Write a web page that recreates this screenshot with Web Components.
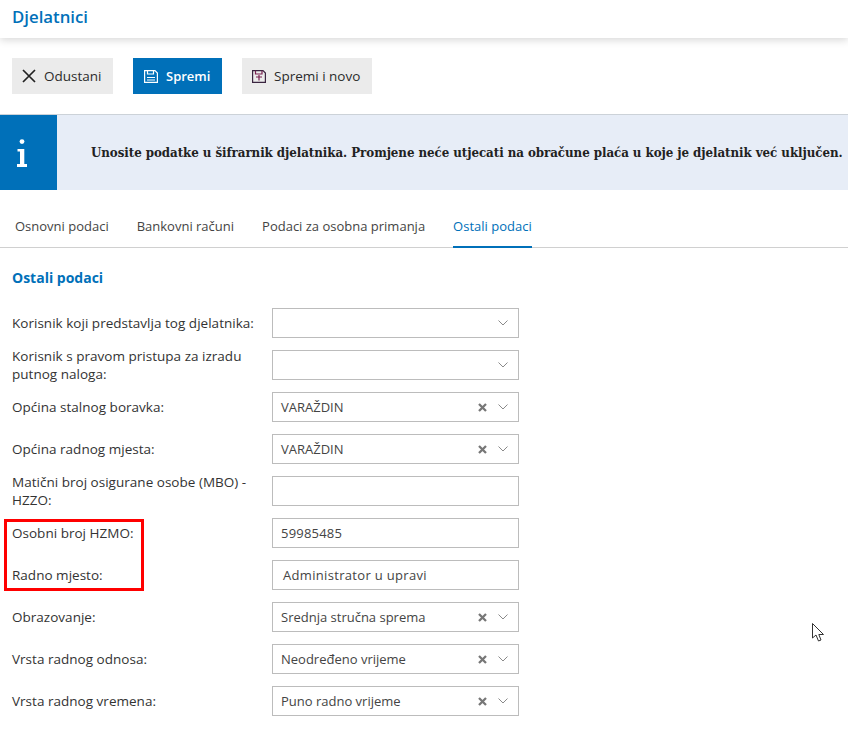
<!DOCTYPE html>
<html lang="hr"><head><meta charset="utf-8"><title>Djelatnici</title>
<style>
html,body{margin:0;padding:0;background:#fff;width:848px;height:731px;overflow:hidden}
body{font-family:"Open Sans","Noto Sans",sans-serif;color:#333;position:relative}
.bar{display:flex;gap:20px;padding:20px 12px 20px}
</style></head><body>
<page-header>Djelatnici</page-header>
<div class="bar">
<tool-button icon="x" style="width:101px">Odustani</tool-button>
<tool-button icon="save" primary style="width:89px">Spremi</tool-button>
<tool-button icon="savenew" style="width:130px">Spremi i novo</tool-button>
</div>
<notice-bar>Unosite podatke u šifrarnik djelatnika. Promjene neće utjecati na obračune plaća u koje je djelatnik već uključen.</notice-bar>
<tab-bar><tab-item>Osnovni podaci</tab-item><tab-item>Bankovni računi</tab-item><tab-item>Podaci za osobna primanja</tab-item><tab-item active>Ostali podaci</tab-item></tab-bar>
<form-section heading="Ostali podaci">
<form-row label="Korisnik koji predstavlja tog djelatnika:"><select-field></select-field></form-row>
<form-row label="Korisnik s pravom pristupa za izradu putnog naloga:"><select-field></select-field></form-row>
<form-row label="Općina stalnog boravka:"><select-field value="VARAŽDIN"></select-field></form-row>
<form-row label="Općina radnog mjesta:"><select-field value="VARAŽDIN"></select-field></form-row>
<form-row label="Matični broj osigurane osobe (MBO) - HZZO:"><text-field></text-field></form-row>
<form-row label="Osobni broj HZMO:"><text-field value="59985485"></text-field></form-row>
<form-row label="Radno mjesto:"><text-field value="Administrator u upravi" wide></text-field></form-row>
<form-row label="Obrazovanje:"><select-field value="Srednja stručna sprema"></select-field></form-row>
<form-row label="Vrsta radnog odnosa:"><select-field value="Neodređeno vrijeme"></select-field></form-row>
<form-row label="Vrsta radnog vremena:"><select-field value="Puno radno vrijeme"></select-field></form-row>
</form-section>
<red-mark></red-mark>
<mouse-cursor></mouse-cursor>
<script>
function def(name,html){customElements.define(name,class extends HTMLElement{
constructor(){super();this.attachShadow({mode:'open'})}
connectedCallback(){this.shadowRoot.innerHTML=typeof html==='function'?html(this):html}
})}
const icons={
x:`<svg width="14" height="14" viewBox="0 0 14 14"><path d="M1 1L13 13M13 1L1 13" stroke="#222" stroke-width="1.7" fill="none"/></svg>`,
save:`<svg width="14" height="13" viewBox="0 0 14 13" fill="none" stroke="#fff" stroke-width="1.2"><path d="M.6.6H11L13.4 3V12.4H.6Z"/><path d="M3.5.8V4H9.5V.8M3 7.5H11M3 10H11"/></svg>`,
savenew:`<svg width="14" height="13" viewBox="0 0 14 13" fill="none" stroke-width="1.2"><path stroke="#3a2440" d="M.6.6H11L13.4 3V12.4H.6Z"/><path stroke="#7a2050" d="M3.5.8V4H10V.8M4 7H10M7 5V10.5"/></svg>`};
def('page-header',`<style>:host{display:flex;align-items:center;height:38px;padding:0 12px 5px;background:#fff;box-shadow:0 2px 8px rgba(0,0,0,.16);font:600 16.8px "Open Sans",sans-serif;color:#0070b9;position:relative;box-sizing:border-box}</style><slot></slot>`);
def('tool-button',h=>{const p=h.hasAttribute('primary');return `<style>:host{display:flex;align-items:center;height:36px;box-sizing:border-box;padding-left:${p?11:10}px;gap:8px;background:${p?'#0070b9':'#ebebeb'};color:${p?'#fff':'#2b2b2b'};font:${p?'600 13px':'400 13.5px'} "Open Sans",sans-serif}svg{display:block;flex:none}</style>${icons[h.getAttribute('icon')]}<slot></slot>`});
def('notice-bar',`<style>:host{display:flex;height:76px;border-top:1px solid #ccd2d8;background:#e7edf7;box-sizing:border-box}.i{width:57px;padding-right:13px;box-sizing:border-box;background:#0070b9;color:#fff;display:flex;align-items:center;justify-content:center;flex:none}.t{padding-left:34px;display:flex;align-items:center;font:700 13.2px "DejaVu Serif",serif;font-stretch:condensed;letter-spacing:-.06px;color:#222;white-space:nowrap}</style><div class="i"><svg width="10" height="28" viewBox="0 0 10 28" fill="#fff"><circle cx="5" cy="2.6" r="2.4"/><path d="M.5 10H7.3V25H10V28H0V25H3V12.6H.5Z"/></svg></div><div class="t"><slot></slot></div>`);
def('tab-bar',`<style>:host{display:flex;gap:28px;height:58px;padding:0 15px;box-sizing:border-box;border-bottom:1px solid #d0d0d0;align-items:flex-end}</style><slot></slot>`);
def('tab-item',h=>`<style>:host{display:flex;align-items:center;height:42px;box-sizing:border-box;font:400 13px "Open Sans",sans-serif;color:${h.hasAttribute('active')?'#0070b9':'#444'};margin-bottom:-1px;border-bottom:2px solid ${h.hasAttribute('active')?'#0070b9':'transparent'}}</style><slot></slot>`);
def('form-section',h=>`<style>:host{display:block;padding:0 12px}h2{margin:0;font:700 14px/19px "Open Sans",sans-serif;color:#0070b9;padding:20px 0 21px}.rows{display:flex;flex-direction:column;gap:12px}</style><h2>${h.getAttribute('heading')}</h2><div class="rows"><slot></slot></div>`);
def('form-row',h=>`<style>:host{display:grid;grid-template-columns:260px 247px;grid-template-rows:30px;height:30px;align-items:center}.l{font:400 13.5px/18px "Open Sans",sans-serif;letter-spacing:.02px;color:#333;width:248px}</style><div class="l">${h.getAttribute('label')}</div><slot></slot>`);
const box=`display:flex;align-items:center;height:30px;box-sizing:border-box;border:1px solid #bcbcbc;background:#fff;font:400 13px "Open Sans",sans-serif;color:#444;white-space:nowrap;`;
def('select-field',h=>{const v=h.getAttribute('value');return `<style>:host{${box}padding:0 10px 0 8px}.v{flex:1}svg{display:block;flex:none}.c{margin-right:11px}</style><span class="v">${v||''}</span>${v?'<svg class="c" width="9" height="9" viewBox="0 0 9 9"><path d="M1 1L8 8M8 1L1 8" stroke="#777" stroke-width="2.3" fill="none"/></svg>':''}<svg width="10" height="6" viewBox="0 0 10 6"><path d="M.5.5L5 5L9.5.5" stroke="#8a8a8a" stroke-width="1" fill="none"/></svg>`});
def('text-field',h=>`<style>:host{${box}padding:0 ${h.hasAttribute('wide')?10:8}px;letter-spacing:${h.hasAttribute('wide')?.32:.2}px}</style>${h.getAttribute('value')||''}`);
def('red-mark',`<style>:host{position:absolute;left:4px;top:519px;width:140px;height:72px;box-sizing:border-box;border:3px solid #f00}</style>`);
def('mouse-cursor',`<style>:host{position:absolute;left:812px;top:623px;width:13px;height:20px}svg{display:block}</style><svg width="13" height="20" viewBox="0 0 13 20"><path d="M.5.5V15L4 12L6.5 18L9 17L6.8 11.5H11.5Z" fill="#fff" stroke="#333" stroke-width="1"/></svg>`);
</script>
</body></html>
